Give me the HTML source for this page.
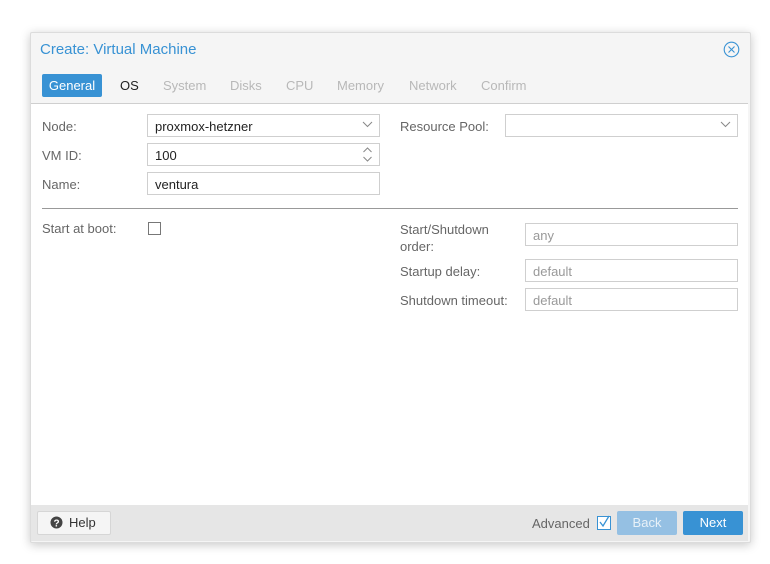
<!DOCTYPE html>
<html><head><style>
body{margin:0;width:770px;height:564px;background:#fff;font-family:"Liberation Sans",sans-serif;font-size:13px;position:relative;overflow:hidden}
.a{position:absolute}
.win{left:30px;top:32px;width:719px;height:509px;background:#f5f5f5;border:1px solid #dcdcdc;box-shadow:0 2px 10px rgba(0,0,0,.22);border-radius:2px}
.lbl{color:#666;font-size:13px}
.in{background:#fff;border:1px solid #cfcfcf;box-sizing:border-box;height:23px;padding:4px 7px;color:#222}
.ph{color:#999}
.tab{top:74px;height:23px;line-height:23px;color:#b8b8b8;font-size:13px}
</style></head><body>
<div class="a win"></div>
<div class="a" style="left:40px;top:41px;color:#3892d4;font-size:15px">Create: Virtual Machine</div>
<svg class="a" style="left:723px;top:41px" width="17" height="17" viewBox="0 0 17 17"><circle cx="8.5" cy="8.5" r="7.3" fill="none" stroke="#3892d4" stroke-width="1.1"/><path d="M5.5 5.5L11.5 11.5M11.5 5.5L5.5 11.5" stroke="#3892d4" stroke-width="1.1"/></svg>
<div class="a tab" style="left:42px;width:60px;background:#3892d4;color:#fff;text-align:center;border-radius:2px">General</div>
<div class="a tab" style="left:120px;color:#222">OS</div>
<div class="a tab" style="left:163px">System</div>
<div class="a tab" style="left:230px">Disks</div>
<div class="a tab" style="left:286px">CPU</div>
<div class="a tab" style="left:337px">Memory</div>
<div class="a tab" style="left:409px">Network</div>
<div class="a tab" style="left:481px">Confirm</div>
<div class="a" style="left:31px;top:103px;width:717px;height:401px;background:#fff;border-top:1px solid #cfcfcf;border-bottom:1px solid #cfcfcf"></div>
<div class="a lbl" style="left:42px;top:119px">Node:</div>
<div class="a in" style="left:147px;top:114px;width:233px">proxmox-hetzner</div>
<svg class="a" style="left:362px;top:121px" width="11" height="7"><path d="M1 1L5.5 5.5L10 1" fill="none" stroke="#888"/></svg>
<div class="a lbl" style="left:42px;top:148px">VM ID:</div>
<div class="a in" style="left:147px;top:143px;width:233px">100</div>
<svg class="a" style="left:362px;top:146px" width="11" height="17"><path d="M1.5 6L5.5 2L9.5 6M1.5 11L5.5 15L9.5 11" fill="none" stroke="#888"/></svg>
<div class="a lbl" style="left:42px;top:177px">Name:</div>
<div class="a in" style="left:147px;top:172px;width:233px">ventura</div>
<div class="a lbl" style="left:400px;top:119px">Resource Pool:</div>
<div class="a in" style="left:505px;top:114px;width:233px"></div>
<svg class="a" style="left:720px;top:121px" width="11" height="7"><path d="M1 1L5.5 5.5L10 1" fill="none" stroke="#888"/></svg>
<div class="a" style="left:42px;top:208px;width:696px;height:1px;background:#999"></div>
<div class="a lbl" style="left:42px;top:221px">Start at boot:</div>
<div class="a" style="left:148px;top:222px;width:11px;height:11px;border:1px solid #777;background:#fff"></div>
<div class="a lbl" style="left:400px;top:221px;line-height:17px">Start/Shutdown<br>order:</div>
<div class="a in ph" style="left:525px;top:223px;width:213px">any</div>
<div class="a lbl" style="left:400px;top:264px">Startup delay:</div>
<div class="a in ph" style="left:525px;top:259px;width:213px">default</div>
<div class="a lbl" style="left:400px;top:293px">Shutdown timeout:</div>
<div class="a in ph" style="left:525px;top:288px;width:213px">default</div>
<div class="a" style="left:31px;top:505px;width:717px;height:36px;background:#e6e6e6"></div>
<div class="a" style="left:37px;top:511px;width:74px;height:24px;background:#f5f5f5;border:1px solid #d6d6d6;border-radius:2px;box-sizing:border-box"></div>
<svg class="a" style="left:50px;top:516px" width="13" height="13"><circle cx="6.5" cy="6.5" r="6" fill="#444"/><text x="6.5" y="10.5" font-size="10" font-weight="bold" fill="#fff" text-anchor="middle" font-family="Liberation Sans">?</text></svg>
<div class="a" style="left:69px;top:515px;color:#333">Help</div>
<div class="a" style="left:532px;top:516px;color:#666">Advanced</div>
<div class="a" style="left:597px;top:516px;width:12px;height:12px;border:1px solid #3892d4;background:#fff"></div>
<svg class="a" style="left:598px;top:515px" width="13" height="13"><path d="M2 7L5 11L11 1" fill="none" stroke="#3892d4" stroke-width="1.3"/></svg>
<div class="a" style="left:617px;top:511px;width:60px;height:24px;background:#95c0e3;color:#e8f1f8;text-align:center;line-height:24px;border-radius:2px">Back</div>
<div class="a" style="left:683px;top:511px;width:60px;height:24px;background:#3892d4;color:#fff;text-align:center;line-height:24px;border-radius:2px">Next</div>
</body></html>
